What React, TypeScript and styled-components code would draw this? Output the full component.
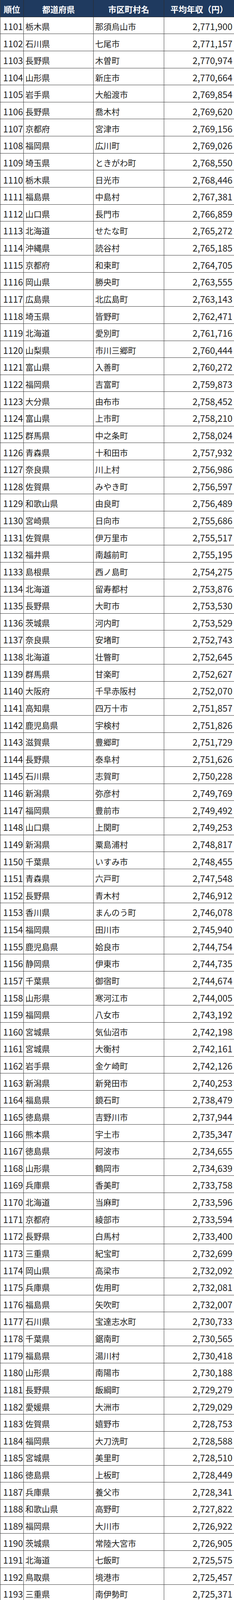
import React from "react";
import styled, { createGlobalStyle } from "styled-components";

const GlobalStyle = createGlobalStyle`
	html, body {
		margin: 0;
		padding: 0;
		background: #fff;
	}
	body {
		font-family: "Noto Sans CJK JP", "Noto Sans", sans-serif;
		color: #222;
	}
`;

const raw = `栃木県 那須烏山市 2,771,900
石川県 七尾市 2,771,157
長野県 木曽町 2,770,974
山形県 新庄市 2,770,664
岩手県 大船渡市 2,769,854
長野県 喬木村 2,769,620
京都府 宮津市 2,769,156
福岡県 広川町 2,769,026
埼玉県 ときがわ町 2,768,550
栃木県 日光市 2,768,446
福島県 中島村 2,767,381
山口県 長門市 2,766,859
北海道 せたな町 2,765,272
沖縄県 読谷村 2,765,185
京都府 和束町 2,764,705
岡山県 勝央町 2,763,555
広島県 北広島町 2,763,143
埼玉県 皆野町 2,762,471
北海道 愛別町 2,761,716
山梨県 市川三郷町 2,760,444
富山県 入善町 2,760,272
福岡県 吉富町 2,759,873
大分県 由布市 2,758,452
富山県 上市町 2,758,210
群馬県 中之条町 2,758,024
青森県 十和田市 2,757,932
奈良県 川上村 2,756,986
佐賀県 みやき町 2,756,597
和歌山県 由良町 2,756,489
宮崎県 日向市 2,755,686
佐賀県 伊万里市 2,755,517
福井県 南越前町 2,755,195
島根県 西ノ島町 2,754,275
北海道 留寿都村 2,753,876
長野県 大町市 2,753,530
茨城県 河内町 2,753,529
奈良県 安堵町 2,752,743
北海道 壮瞥町 2,752,645
群馬県 甘楽町 2,752,627
大阪府 千早赤阪村 2,752,070
高知県 四万十市 2,751,857
鹿児島県 宇検村 2,751,826
滋賀県 豊郷町 2,751,729
長野県 泰阜村 2,751,626
石川県 志賀町 2,750,228
新潟県 弥彦村 2,749,769
福岡県 豊前市 2,749,492
山口県 上関町 2,749,253
新潟県 粟島浦村 2,748,817
千葉県 いすみ市 2,748,455
青森県 六戸町 2,747,548
長野県 青木村 2,746,912
香川県 まんのう町 2,746,078
福岡県 田川市 2,745,940
鹿児島県 姶良市 2,744,754
静岡県 伊東市 2,744,735
千葉県 御宿町 2,744,674
山形県 寒河江市 2,744,005
福岡県 八女市 2,743,192
宮城県 気仙沼市 2,742,198
宮城県 大衡村 2,742,161
岩手県 金ケ崎町 2,742,126
新潟県 新発田市 2,740,253
福島県 鏡石町 2,738,479
徳島県 吉野川市 2,737,944
熊本県 宇土市 2,735,347
徳島県 阿波市 2,734,655
山形県 鶴岡市 2,734,639
兵庫県 香美町 2,733,758
北海道 当麻町 2,733,596
京都府 綾部市 2,733,594
長野県 白馬村 2,733,400
三重県 紀宝町 2,732,699
岡山県 高梁市 2,732,092
兵庫県 佐用町 2,732,081
福島県 矢吹町 2,732,007
石川県 宝達志水町 2,730,733
千葉県 鋸南町 2,730,565
福島県 湯川村 2,730,418
山形県 南陽市 2,730,188
長野県 飯綱町 2,729,279
愛媛県 大洲市 2,729,029
佐賀県 嬉野市 2,728,753
福岡県 大刀洗町 2,728,588
宮城県 美里町 2,728,510
徳島県 上板町 2,728,449
兵庫県 養父市 2,728,341
和歌山県 高野町 2,727,822
福岡県 大川市 2,726,922
茨城県 常陸大宮市 2,726,905
北海道 七飯町 2,725,575
鳥取県 境港市 2,725,457
三重県 南伊勢町 2,725,371
秋田県 小坂町 2,725,271
新潟県 妙高市 2,725,224
佐賀県 鹿島市 2,725,079
岡山県 奈義町 2,724,589
岩手県 奥州市 2,724,206
福井県 勝山市 2,723,824
千葉県 勝浦市 2,723,793`;

const rows = raw.split("\n").map((line, i) => {
	const [pref, city, income] = line.split(" ");
	return { rank: 1101 + i, pref, city, income };
});

const headers = ["順位", "都道府県", "市区町村名", "平均年収（円）"];

const App: React.FC = () => {
	return (
		<>
			<GlobalStyle />
			<Grid>
				{headers.map((h) => (
					<HeadCell key={h}>{h}</HeadCell>
				))}
				{rows.map((r) => (
					<React.Fragment key={r.rank}>
						<NumCell>{r.rank}</NumCell>
						<TextCell>{r.pref}</TextCell>
						<TextCell>{r.city}</TextCell>
						<NumCell $right>{r.income}</NumCell>
					</React.Fragment>
				))}
			</Grid>
		</>
	);
};

export default App;

const Grid = styled.div`
	display: grid;
	width: 600px;
	grid-template-columns: 60px 179px 181px 180px;
	grid-auto-rows: 43.64px;
	box-sizing: border-box;
	border-left: 1px solid #3a3a3a;
`;
const Cell = styled.div`
	display: flex;
	align-items: center;
	box-sizing: border-box;
	padding-top: 5px;
	border-right: 1px solid #3a3a3a;
	border-bottom: 1px solid #3a3a3a;
	white-space: nowrap;
	line-height: 1;
`;
const HeadCell = styled(Cell)`
	justify-content: center;
	padding-top: 4px;
	background: #1f3a5f;
	color: #fff;
	font-size: 21px;
	font-weight: 700;
	border-color: #2a2a2a;
`;
const TextCell = styled(Cell)`
	padding-left: 4px;
	font-size: 21px;
	color: #222;
`;
const NumCell = styled(Cell)<{ $right?: boolean }>`
	justify-content: ${(p) => (p.$right ? "flex-end" : "flex-start")};
	padding-left: ${(p) => (p.$right ? "0" : "7px")};
	padding-right: ${(p) => (p.$right ? "4px" : "0")};
	font-family: "Liberation Sans Narrow", "Noto Sans CJK JP", sans-serif;
	font-size: 23px;
	color: #222;
`;
